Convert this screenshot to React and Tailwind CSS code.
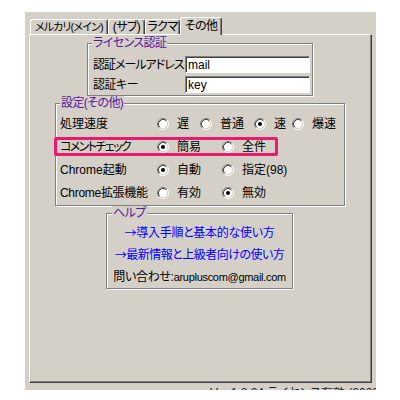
import React from "react";

// Windows classic radio button
const Radio = ({ checked }) => (
  <svg width="12" height="12" viewBox="0 0 12 12" className="shrink-0">
    <circle cx="6" cy="6" r="4.5" fill="#fff" />
    <path d="M2.11 9.89 A5.5 5.5 0 0 1 9.89 2.11" fill="none" stroke="#808080" strokeWidth="1" />
    <path d="M9.89 2.11 A5.5 5.5 0 0 1 2.11 9.89" fill="none" stroke="#fff" strokeWidth="1" />
    <path d="M2.82 9.18 A4.5 4.5 0 0 1 9.18 2.82" fill="none" stroke="#404040" strokeWidth="1" />
    <path d="M9.18 2.82 A4.5 4.5 0 0 1 2.82 9.18" fill="none" stroke="#d4d0c8" strokeWidth="1" />
    {checked && <circle cx="6" cy="6" r="2" fill="#000" />}
  </svg>
);

const Option = ({ label, checked, width }) => (
  <div className={`flex items-center gap-[8px] shrink-0 ${width}`}>
    <Radio checked={checked} />
    <span>{label}</span>
  </div>
);

const Legend = ({ children, left }) => (
  <span className={`absolute -top-[8px] ${left} px-[1px] bg-[#d4d0c8] text-[#5a189a] leading-[14px] tracking-[-0.6px]`}>
    {children}
  </span>
);

const groupFrame =
  "relative border border-[#808080] shadow-[1px_1px_0_#fff,inset_1px_1px_0_#fff]";

const Tab = ({ label, width, selected, extra = "" }) => (
  <div
    className={`${width} ${extra} shrink-0 flex items-center justify-center rounded-t-[3px] border-t border-l border-r border-t-white border-l-white border-r-[#404040] shadow-[inset_-1px_0_0_#808080] bg-[#d4d0c8] ${
      selected ? "h-[18px] -mb-[1px] relative z-10 pb-[2px]" : "h-[15px]"
    }`}
  >
    {label}
  </div>
);

const EditBox = ({ value }) => (
  <input
    readOnly
    defaultValue={value}
    className="w-[125px] h-[17px] shrink-0 bg-white px-[2px] border border-t-[#808080] border-l-[#808080] border-r-white border-b-white shadow-[inset_1px_1px_0_#404040] outline-none leading-[15px]"
  />
);

const Arrow = () => <span className="font-['Noto_Sans_CJK_JP',sans-serif]">→</span>;

export default function App() {
  return (
    <div className="w-[400px] h-[400px] bg-white pt-[12px] pl-[25px] text-[12px] text-black whitespace-nowrap font-['Liberation_Sans','Noto_Sans_CJK_JP',sans-serif] [font-feature-settings:'palt']">
      <div className="w-[351px] h-[378px] bg-[#d4d0c8] pt-[5px] pl-[4px] overflow-hidden">
        {/* Tabs */}
        <div className="flex items-end h-[17px] pl-[1px] leading-[14px]">
          <Tab label="メルカリ(メイン)" width="w-[78px]" extra="text-[11px] tracking-[-0.8px]" />
          <Tab label="(サブ)" width="w-[37px]" extra="tracking-[-0.6px]" />
          <Tab label="ラクマ" width="w-[35px]" extra="tracking-[-0.6px]" />
          <Tab label="その他" width="w-[42px]" selected extra="tracking-[-0.6px]" />
        </div>

        {/* Tab panel */}
        <div className="w-[343px] h-[349px] border-t border-l border-r border-b border-t-white border-l-white border-r-[#404040] border-b-[#404040] shadow-[inset_-1px_-1px_0_#808080] flex flex-col items-start">
          {/* License */}
          <div className={`${groupFrame} ml-[57px] mt-[8px] w-[226px] h-[53px] pt-[12px] flex flex-col gap-[3px]`}>
            <Legend left="left-[4px]">ライセンス認証</Legend>
            <div className="flex items-center h-[17px] pl-[5px]">
              <span className="w-[92px] shrink-0 tracking-[-1px]">認証メールアドレス</span>
              <EditBox value="mail" />
            </div>
            <div className="flex items-center h-[17px] pl-[5px]">
              <span className="w-[92px] shrink-0 tracking-[-0.5px]">認証キー</span>
              <EditBox value="key" />
            </div>
          </div>

          {/* Settings */}
          <div className={`${groupFrame} ml-[25px] mt-[7px] w-[290px] h-[103px] pt-[8px]`}>
            <Legend left="left-[4px]">設定(その他)</Legend>
            <div className="flex items-center h-[23px] pl-[4px]">
              <span className="w-[97px] shrink-0">処理速度</span>
              <Option label="遅" width="w-[43px]" />
              <Option label="普通" width="w-[54px]" />
              <Option label="速" width="w-[38px]" checked />
              <Option label="爆速" />
            </div>
            <div className="flex items-center h-[23px] pl-[4px]">
              <span className="w-[97px] shrink-0 tracking-[-1.6px]">コメントチェック</span>
              <Option label="簡易" width="w-[65px]" checked />
              <Option label="全件" />
            </div>
            <div className="flex items-center h-[23px] pl-[4px]">
              <span className="w-[97px] shrink-0">Chrome起動</span>
              <Option label="自動" width="w-[65px]" checked />
              <Option label="指定(98)" />
            </div>
            <div className="flex items-center h-[23px] pl-[4px]">
              <span className="w-[97px] shrink-0 tracking-[-0.3px]">Chrome拡張機能</span>
              <Option label="有効" width="w-[65px]" />
              <Option label="無効" checked />
            </div>
            {/* highlight */}
            <div className="absolute left-[-2px] top-[33px] w-[224px] h-[19px] border-[3px] border-[#ec1a6c] rounded-[2px]" />
          </div>

          {/* Help */}
          <div className={`${groupFrame} ml-[76px] mt-[7px] w-[187px] h-[76px] pt-[8px] flex flex-col items-center`}>
            <Legend left="left-[5px]">ヘルプ</Legend>
            <div className="h-[22px] flex items-center text-[#0000ff] tracking-[-0.3px]">
              <Arrow />導入手順と基本的な使い方
            </div>
            <div className="h-[22px] flex items-center text-[#0000ff] tracking-[-0.5px]">
              <Arrow />最新情報と上級者向けの使い方
            </div>
            <div className="h-[22px] flex items-center tracking-[-0.3px]">
              問い合わせ:<span className="text-[11px]">arupluscom@gmail.com</span>
            </div>
          </div>
        </div>

        {/* clipped status line */}
        <div className="mt-[4px] ml-[181px] h-[3px] overflow-hidden leading-[12px] text-[#222]">
          Ver.1.8.24 ライセンス有効 (2022/06/01)
        </div>
      </div>
    </div>
  );
}
